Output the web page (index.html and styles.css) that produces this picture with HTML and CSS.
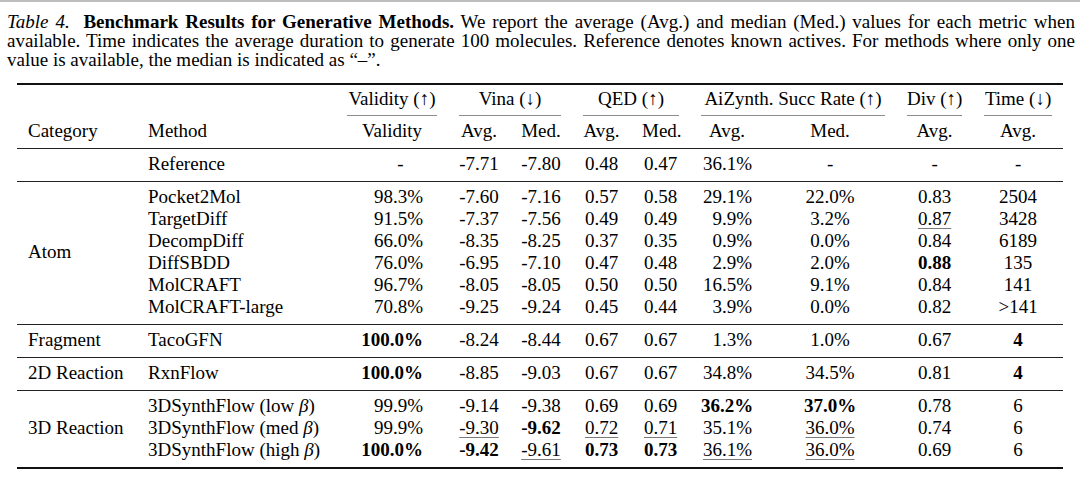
FILE: index.html
```html
<!DOCTYPE html>
<html>
<head>
<meta charset="utf-8">
<link rel="stylesheet" href="styles.css">
</head>
<body>
<div class="page">
  <p class="caption">
    <span class="line"><i>Table 4.</i>&nbsp; <b>Benchmark Results for Generative Methods.</b> We report the average (Avg.) and median (Med.) values for each metric when</span>
    <span class="line">available. Time indicates the average duration to generate 100 molecules. Reference denotes known actives. For methods where only one</span>
    <span class="last">value is available, the median is indicated as “–”.</span>
  </p>
  <table class="results">
    <colgroup>
      <col class="w-cat"><col class="w-method"><col class="w-valid">
      <col class="w-vina-a"><col class="w-vina-m">
      <col class="w-qed-a"><col class="w-qed-m">
      <col class="w-ai-a"><col class="w-ai-m">
      <col class="w-div"><col class="w-time">
    </colgroup>
    <thead>
      <tr class="h1">
        <td></td><td></td>
        <td><div class="cm">Validity (↑)</div></td>
        <td colspan="2"><div class="cm">Vina (↓)</div></td>
        <td colspan="2"><div class="cm">QED (↑)</div></td>
        <td colspan="2"><div class="cm">AiZynth. Succ Rate (↑)</div></td>
        <td><div class="cm">Div (↑)</div></td>
        <td><div class="cm">Time (↓)</div></td>
      </tr>
      <tr class="h2">
        <td class="l">Category</td><td class="l">Method</td>
        <td>Validity</td>
        <td>Avg.</td><td>Med.</td>
        <td>Avg.</td><td>Med.</td>
        <td>Avg.</td><td>Med.</td>
        <td>Avg.</td>
        <td>Avg.</td>
      </tr>
    </thead>
    <tbody>
      <tr class="gs ge rule">
        <td></td><td class="l">Reference</td>
        <td class="dash">-</td>
        <td>-7.71</td><td>-7.80</td>
        <td>0.48</td><td>0.47</td>
        <td class="ar">36.1%</td><td>-</td>
        <td>-</td><td>-</td>
      </tr>
    </tbody>
    <tbody>
      <tr class="gs">
        <td class="l cat rb" rowspan="6">Atom</td><td class="l">Pocket2Mol</td>
        <td class="vr">98.3%</td>
        <td>-7.60</td><td>-7.16</td>
        <td>0.57</td><td>0.58</td>
        <td class="ar">29.1%</td><td>22.0%</td>
        <td>0.83</td><td>2504</td>
      </tr>
      <tr>
        <td class="l">TargetDiff</td>
        <td class="vr">91.5%</td>
        <td>-7.37</td><td>-7.56</td>
        <td>0.49</td><td>0.49</td>
        <td class="ar">9.9%</td><td>3.2%</td>
        <td><span class="u">0.87</span></td><td>3428</td>
      </tr>
      <tr>
        <td class="l">DecompDiff</td>
        <td class="vr">66.0%</td>
        <td>-8.35</td><td>-8.25</td>
        <td>0.37</td><td>0.35</td>
        <td class="ar">0.9%</td><td>0.0%</td>
        <td>0.84</td><td>6189</td>
      </tr>
      <tr>
        <td class="l">DiffSBDD</td>
        <td class="vr">76.0%</td>
        <td>-6.95</td><td>-7.10</td>
        <td>0.47</td><td>0.48</td>
        <td class="ar">2.9%</td><td>2.0%</td>
        <td><b>0.88</b></td><td>135</td>
      </tr>
      <tr>
        <td class="l">MolCRAFT</td>
        <td class="vr">96.7%</td>
        <td>-8.05</td><td>-8.05</td>
        <td>0.50</td><td>0.50</td>
        <td class="ar">16.5%</td><td>9.1%</td>
        <td>0.84</td><td>141</td>
      </tr>
      <tr class="ge rule">
        <td class="l">MolCRAFT-large</td>
        <td class="vr">70.8%</td>
        <td>-9.25</td><td>-9.24</td>
        <td>0.45</td><td>0.44</td>
        <td class="ar">3.9%</td><td>0.0%</td>
        <td>0.82</td><td>&gt;141</td>
      </tr>
    </tbody>
    <tbody>
      <tr class="gs ge rule">
        <td class="l">Fragment</td><td class="l">TacoGFN</td>
        <td class="vr"><b>100.0%</b></td>
        <td>-8.24</td><td>-8.44</td>
        <td>0.67</td><td>0.67</td>
        <td class="ar">1.3%</td><td>1.0%</td>
        <td>0.67</td><td><b>4</b></td>
      </tr>
    </tbody>
    <tbody>
      <tr class="gs ge rule">
        <td class="l">2D Reaction</td><td class="l">RxnFlow</td>
        <td class="vr"><b>100.0%</b></td>
        <td>-8.85</td><td>-9.03</td>
        <td>0.67</td><td>0.67</td>
        <td class="ar">34.8%</td><td>34.5%</td>
        <td>0.81</td><td><b>4</b></td>
      </tr>
    </tbody>
    <tbody>
      <tr class="gs">
        <td class="l cat" rowspan="3">3D Reaction</td><td class="l">3DSynthFlow (low <i class="m">β</i>)</td>
        <td class="vr">99.9%</td>
        <td>-9.14</td><td>-9.38</td>
        <td>0.69</td><td>0.69</td>
        <td class="ar"><b>36.2%</b></td><td><b>37.0%</b></td>
        <td>0.78</td><td>6</td>
      </tr>
      <tr>
        <td class="l">3DSynthFlow (med <i class="m">β</i>)</td>
        <td class="vr">99.9%</td>
        <td><span class="u">-9.30</span></td><td><b>-9.62</b></td>
        <td><span class="u">0.72</span></td><td><span class="u">0.71</span></td>
        <td class="ar">35.1%</td><td><span class="u">36.0%</span></td>
        <td>0.74</td><td>6</td>
      </tr>
      <tr class="ge">
        <td class="l">3DSynthFlow (high <i class="m">β</i>)</td>
        <td class="vr"><b>100.0%</b></td>
        <td><b>-9.42</b></td><td><span class="u">-9.61</span></td>
        <td><b>0.73</b></td><td><b>0.73</b></td>
        <td class="ar"><span class="u">36.1%</span></td><td><span class="u">36.0%</span></td>
        <td>0.69</td><td>6</td>
      </tr>
    </tbody>
  </table>
</div>
</body>
</html>
```

FILE: styles.css
```css
html, body {
  margin: 0;
  background: #ffffff;
}

body {
  color: #000000;
  font-family: "Liberation Serif", "Times New Roman", "DejaVu Serif", serif;
}

.page {
  border-top: 2px solid #bdbdbd;
  padding: 10px 5px 0 7px;
}

.caption {
  margin: 0;
  font-size: 19px;
  line-height: 19px;
}

.caption .line {
  display: block;
  white-space: nowrap;
  text-align: justify;
  text-align-last: justify;
}

.caption .last {
  display: block;
  white-space: nowrap;
}

.results {
  margin: 14px 0 0 10px;
  width: 1046px;
  table-layout: fixed;
  border-collapse: separate;
  border-spacing: 0;
  border-top: 2px solid #111111;
  border-bottom: 2px solid #111111;
  font-size: 19px;
  line-height: 22px;
}

.w-cat { width: 120px; }
.w-method { width: 199px; }
.w-valid { width: 112px; }
.w-vina-a { width: 62px; }
.w-vina-m { width: 62px; }
.w-qed-a { width: 59px; }
.w-qed-m { width: 59px; }
.w-ai-a { width: 74px; }
.w-ai-m { width: 132px; }
.w-div { width: 77px; }
.w-time { width: 90px; }

.results td {
  padding: 0 11px;
  text-align: center;
  white-space: nowrap;
  vertical-align: top;
}

.results td.l {
  text-align: left;
  padding-left: 11px;
}

.results td.vr {
  text-align: right;
  padding-right: 25px;
}

.results td.dash {
  padding-left: 28px;
}

.results td.ar {
  text-align: right;
  padding-right: 12px;
}

.results td.cat {
  vertical-align: middle;
  padding-top: 4px;
  padding-bottom: 6px;
}

.h1 td {
  padding-top: 3px;
  padding-bottom: 0;
}

.cm {
  padding-bottom: 5px;
  border-bottom: 1px solid #8c8c8c;
}

.h2 td {
  padding-top: 4px;
  padding-bottom: 6px;
  border-bottom: 1px solid #222222;
}

.gs td {
  padding-top: 4px;
}

.ge td {
  padding-bottom: 6px;
}

.rule td,
.results td.rb {
  border-bottom: 1px solid #222222;
}

.u {
  text-decoration: underline;
  text-decoration-color: #7a7a7a;
  text-decoration-thickness: 1px;
  text-underline-offset: 3px;
}

.m {
  font-style: italic;
}
```
